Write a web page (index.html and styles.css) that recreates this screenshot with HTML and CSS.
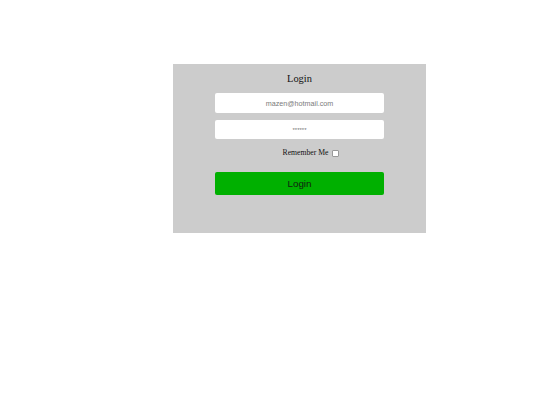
FILE: index.html
```html
<!DOCTYPE html>
<html>
<head>
<meta charset="utf-8">
<link rel="stylesheet" href="styles.css">
</head>
<body>
<div class="panel">
  <h2 class="title">Login</h2>
  <input class="field" type="text" placeholder="mazen@hotmail.com">
  <input class="field pass" type="text" placeholder="******">
  <label class="remember">Remember Me <span class="check"></span></label>
  <button class="btn">Login</button>
</div>
</body>
</html>
```
FILE: styles.css
```css
html, body { margin: 0; padding: 0; background: #fff; }
.panel {
  margin: 64px 0 0 173px;
  width: 253px;
  height: 169px;
  box-sizing: border-box;
  padding: 6px 42px 0;
  background: #cccccc;
  display: flex;
  flex-direction: column;
}
.title {
  margin: 0;
  font-family: "Liberation Serif", serif;
  font-weight: normal;
  font-size: 10.4px;
  line-height: 17px;
  text-align: center;
  color: #111;
}
.field {
  margin: 6px 0 0;
  height: 20px;
  box-sizing: border-box;
  border: none;
  border-radius: 2px;
  background: #fff;
  padding: 0;
  font-family: "Liberation Sans", sans-serif;
  font-size: 7.2px;
  text-align: center;
  outline: none;
}
.field::placeholder { color: #7a7a7a; }
.pass { margin-top: 7px; height: 19px; }
.pass::placeholder { font-size: 6px; color: #777; }
.remember {
  margin: 8px 0 0 23px;
  font-family: "Liberation Serif", serif;
  font-size: 7.7px;
  line-height: 12px;
  color: #111;
  text-align: center;
  display: flex;
  justify-content: center;
  align-items: center;
  gap: 4px;
}
.check {
  display: inline-block;
  width: 5px;
  height: 5px;
  background: #fff;
  border: 0.5px solid #999;
  border-radius: 1px;
}
.btn {
  margin-top: 13px;
  height: 23px;
  border: none;
  border-radius: 2px;
  background: #00b000;
  color: #102010;
  font-family: "Liberation Sans", sans-serif;
  font-size: 9.8px;
  padding: 0;
}
```
